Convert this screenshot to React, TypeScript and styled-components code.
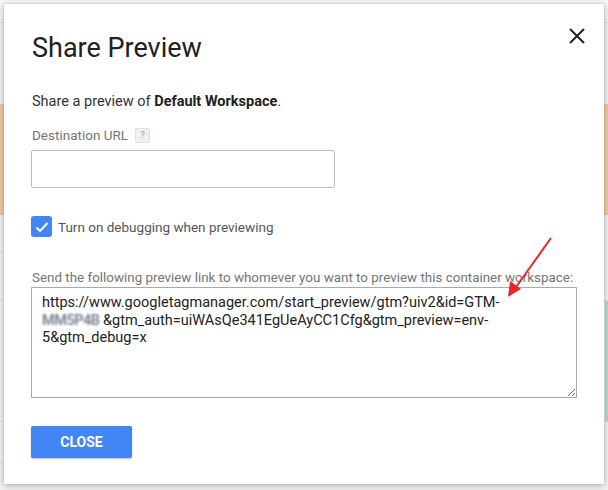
import styled, { createGlobalStyle } from "styled-components";

const COLORS = {
  blue: "#4285f4",
  text: "#212121",
  muted: "#757575",
  border: "#bdbdbd",
  red: "#e5262d",
};

const GlobalStyle = createGlobalStyle`
  html, body {
    margin: 0;
    padding: 0;
    background: #f1f1f1;
    font-family: Roboto, "Liberation Sans", Arial, sans-serif;
  }
`;

const Page = styled.div`
  position: relative;
  width: 608px;
  height: 490px;
  overflow: hidden;
  background: #f3f3f3;
`;

const TopBar = styled.div`
  height: 22px;
  border-bottom: 1px solid #dcdcdc;
  background: #f6f6f6;
`;

const Banner = styled.div`
  margin-top: 81px;
  height: 111px;
  background: #f2cba1;
`;

const BgRow = styled.div<{ $h: number; $accent?: string }>`
  height: ${(p) => p.$h}px;
  border-bottom: 1px solid #dedede;
  border-right: 3px solid ${(p) => p.$accent ?? "transparent"};
`;

const Dialog = styled.div`
  position: absolute;
  left: 4px;
  top: 4px;
  width: 600px;
  height: 480px;
  box-sizing: border-box;
  background: #fff;
  box-shadow: 0 2px 8px rgba(0, 0, 0, 0.25), 0 0 2px rgba(0, 0, 0, 0.15);
  padding: 28px 27px 0 27px;
  display: flex;
  flex-direction: column;
`;

const CloseIcon = styled.button`
  all: unset;
  position: absolute;
  top: 20px;
  right: 16px;
  width: 23px;
  height: 23px;
  display: flex;
  align-items: center;
  justify-content: center;
  cursor: pointer;
`;

const Title = styled.h1`
  margin: 0 0 0 1px;
  font-size: 27px;
  line-height: 32px;
  font-weight: 400;
  color: ${COLORS.text};
`;

const Intro = styled.p`
  margin: 29px 0 0 1px;
  font-size: 14.5px;
  line-height: 18px;
  color: #333;

  b {
    font-weight: 700;
    color: ${COLORS.text};
  }
`;

const Label = styled.div`
  margin: 15px 0 0 1px;
  display: flex;
  align-items: center;
  gap: 7px;
  font-size: 13.5px;
  line-height: 18px;
  color: ${COLORS.muted};
`;

const Help = styled.span`
  width: 15px;
  height: 15px;
  box-sizing: border-box;
  border: 1px solid #e0e0e0;
  border-radius: 2px;
  background: #f0f0f0;
  color: #9e9e9e;
  font-size: 9px;
  line-height: 13px;
  text-align: center;
`;

const TextInput = styled.input`
  margin-top: 6px;
  width: 304px;
  height: 38px;
  box-sizing: border-box;
  border: 1px solid ${COLORS.border};
  border-radius: 2px;
  outline: none;
  padding: 0 10px;
  font: inherit;
`;

const CheckRow = styled.label`
  margin-top: 28px;
  display: flex;
  align-items: center;
  gap: 6px;
  font-size: 13.5px;
  color: #555;
`;

const CheckBox = styled.span`
  width: 21px;
  height: 21px;
  border-radius: 3px;
  background: ${COLORS.blue};
  display: flex;
  align-items: center;
  justify-content: center;
`;

const Hint = styled.div`
  margin: 32px 0 0 1px;
  font-size: 13.4px;
  line-height: 18px;
  color: ${COLORS.muted};
  white-space: nowrap;
`;

const LinkBox = styled.div`
  margin-top: 0;
  width: 546px;
  height: 111px;
  box-sizing: border-box;
  border: 1px solid #a9a9a9;
  padding: 6px 10px;
  font-size: 14.5px;
  line-height: 17.5px;
  color: #222;
  resize: both;
  overflow: auto;
`;

const Line = styled.div`
  white-space: nowrap;
`;

const Blurred = styled.span`
  display: inline-block;
  width: 61px;
  overflow: hidden;
  vertical-align: bottom;
  color: #7d8798;
  filter: blur(1.3px);
  letter-spacing: -0.5px;
  font-weight: 700;
`;

const Actions = styled.div`
  margin-top: 28px;
  display: flex;
`;

const PrimaryButton = styled.button`
  all: unset;
  width: 101px;
  height: 32px;
  border-radius: 2px;
  background: ${COLORS.blue};
  color: #fff;
  font-size: 14px;
  font-weight: 700;
  text-align: center;
  line-height: 32px;
  box-shadow: 0 1px 2px rgba(0, 0, 0, 0.25);
  cursor: pointer;
`;

const Arrow = styled.svg`
  position: absolute;
  left: 500px;
  top: 234px;
  overflow: visible;
`;

export default function App() {
  return (
    <Page>
      <GlobalStyle />
      <TopBar />
      <Banner />
      <BgRow $h={36} />
      <BgRow $h={48} />
      <BgRow $h={120} $accent="#b5dccd" />
      <BgRow $h={40} />

      <Dialog>
        <CloseIcon aria-label="Close">
          <svg width="16" height="16" viewBox="0 0 16 16">
            <path d="M1 1 L15 15 M15 1 L1 15" stroke="#212121" strokeWidth="2" />
          </svg>
        </CloseIcon>
        <Title>Share Preview</Title>
        <Intro>
          Share a preview of <b>Default Workspace</b>.
        </Intro>
        <Label>
          Destination URL <Help>?</Help>
        </Label>
        <TextInput type="text" />
        <CheckRow>
          <CheckBox>
            <svg width="14" height="12" viewBox="0 0 14 12">
              <path d="M1.5 6.5 L5 10 L12.5 2" fill="none" stroke="#fff" strokeWidth="2" />
            </svg>
          </CheckBox>
          Turn on debugging when previewing
        </CheckRow>
        <Hint>
          Send the following preview link to whomever you want to preview this container workspace:
        </Hint>
        <LinkBox>
          <Line>https://www.googletagmanager.com/start_preview/gtm?uiv2&amp;id=GTM-</Line>
          <Line>
            <Blurred>MM5P4B</Blurred>&amp;gtm_auth=uiWAsQe341EgUeAyCC1Cfg&amp;gtm_preview=env-
          </Line>
          <Line>5&amp;gtm_debug=x</Line>
        </LinkBox>
        <Actions>
          <PrimaryButton>CLOSE</PrimaryButton>
        </Actions>
      </Dialog>

      <Arrow width="60" height="70">
        <path d="M51 4 L14 56" stroke={COLORS.red} strokeWidth="2" />
        <path d="M8 63 L10 47 L21 55 Z" fill={COLORS.red} />
      </Arrow>
    </Page>
  );
}
